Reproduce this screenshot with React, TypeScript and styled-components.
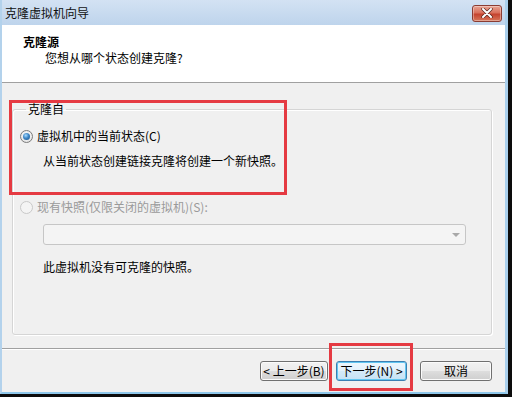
import React from 'react';
import styled, { createGlobalStyle } from 'styled-components';

const GlobalStyle = createGlobalStyle`
  html, body {
    margin: 0;
    padding: 0;
    background: #0c0c0c;
  }
  body {
    font-family: "Noto Sans CJK SC", "Noto Sans", sans-serif;
    font-size: 12px;
    color: #000;
  }
`;

const Window = styled.div`
  position: relative;
  box-sizing: border-box;
  width: 508px;
  height: 394px;
  display: flex;
  flex-direction: column;
  border-left: 2px solid #b3d2ec;
  border-right: 3px solid #a9cfec;
  border-bottom: 2px solid #8ec7ea;
  background: #f0f0f0;
`;

const TitleBar = styled.div`
  height: 25px;
  display: flex;
  align-items: center;
  justify-content: space-between;
  padding: 0 3px 0 3px;
  background: linear-gradient(#d3e2f3, #bed4ec);
`;

const TitleText = styled.span`
  font-size: 12px;
  line-height: 16px;
  color: #111;
`;

const CloseButton = styled.div`
  box-sizing: border-box;
  width: 30px;
  height: 17px;
  margin-top: 1px;
  display: flex;
  align-items: center;
  justify-content: center;
  border: 1px solid #8a3c33;
  border-radius: 3px;
  background: linear-gradient(#e8a493 0%, #d9705c 45%, #c5432f 55%, #d7765a 100%);
  box-shadow: inset 0 0 0 1px rgba(255, 255, 255, 0.35);
`;

const Header = styled.div`
  height: 58px;
  box-sizing: border-box;
  background: #fff;
  border-bottom: 1px solid #a0a0a0;
  padding: 9px 0 0 21px;
`;

const HeaderTitle = styled.div`
  font-weight: bold;
  line-height: 16px;
`;

const HeaderSub = styled.div`
  line-height: 16px;
  padding-left: 22px;
`;

const Body = styled.div`
  flex: 1;
  display: flex;
  flex-direction: column;
  padding: 19px 13px 0 10px;
`;

const GroupBox = styled.fieldset`
  box-sizing: border-box;
  height: 233px;
  margin: 0;
  padding: 12px 7px 0 7px;
  border: 1px solid #d5d5d5;
  border-radius: 3px;
  box-shadow: inset 1px 1px 0 #fff, 1px 1px 0 #fff;
  display: flex;
  flex-direction: column;
`;

const Legend = styled.legend`
  margin-left: 6px;
  padding: 0 2px;
  line-height: 14px;
  font-size: 12px;
`;

const OptionRow = styled.div<{ $disabled?: boolean; $top?: number }>`
  display: flex;
  align-items: center;
  gap: 4px;
  line-height: 16px;
  margin-top: ${({ $top }) => $top ?? 0}px;
  color: ${({ $disabled }) => ($disabled ? '#9a9a9a' : '#000')};
`;

const Radio = styled.span<{ $checked?: boolean; $disabled?: boolean }>`
  position: relative;
  box-sizing: border-box;
  width: 13px;
  height: 13px;
  border-radius: 50%;
  border: 1px solid ${({ $disabled }) => ($disabled ? '#c9c9c9' : '#7b7b7b')};
  background: ${({ $disabled }) =>
    $disabled ? '#f4f4f4' : 'radial-gradient(circle at 50% 40%, #ffffff 0%, #dcdcdc 100%)'};

  &::after {
    content: '';
    display: ${({ $checked }) => ($checked ? 'block' : 'none')};
    position: absolute;
    left: 2px;
    top: 2px;
    width: 7px;
    height: 7px;
    border-radius: 50%;
    background: radial-gradient(circle at 40% 35%, #a8dbff 0%, #3d86c6 45%, #1b4f82 100%);
  }
`;

const Note = styled.div<{ $top: number }>`
  line-height: 16px;
  padding-left: 23px;
  margin-top: ${({ $top }) => $top}px;
`;

const ComboBox = styled.div`
  position: relative;
  box-sizing: border-box;
  height: 21px;
  margin: 9px 18px 0 23px;
  border: 1px solid #c6c6c6;
  border-radius: 3px;
  background: #f4f4f4;

  &::after {
    content: '';
    position: absolute;
    right: 5px;
    top: 8px;
    border-left: 4px solid transparent;
    border-right: 4px solid transparent;
    border-top: 4px solid #a8a8a8;
  }
`;

const Separator = styled.div`
  margin: 13px -13px 0 -10px;
  border-top: 1px solid #a0a0a0;
  border-bottom: 1px solid #fff;
`;

const ButtonRow = styled.div`
  display: flex;
  justify-content: flex-end;
  margin-top: 11px;
`;

const Button = styled.button<{ $width: number; $focused?: boolean; $gap?: number }>`
  box-sizing: border-box;
  width: ${({ $width }) => $width}px;
  height: 20px;
  margin-left: ${({ $gap }) => $gap ?? 0}px;
  padding: 0;
  font-family: "Noto Sans CJK SC", "Noto Sans", sans-serif;
  font-size: 12px;
  line-height: 16px;
  color: #000;
  border-radius: 3px;
  border: 1px solid ${({ $focused }) => ($focused ? '#3c7fb1' : '#707070')};
  background: ${({ $focused }) =>
    $focused
      ? 'linear-gradient(#eef7fd 0%, #e3f1fb 48%, #d4eaf8 52%, #c6e2f5 100%)'
      : 'linear-gradient(#f2f2f2 0%, #ebebeb 48%, #dddddd 52%, #cfcfcf 100%)'};
  box-shadow: inset 0 0 0 1px ${({ $focused }) => ($focused ? '#62c6f1' : '#fbfbfb')};
`;

const Highlight = styled.div<{ $x: number; $y: number; $w: number; $h: number }>`
  position: absolute;
  left: ${({ $x }) => $x}px;
  top: ${({ $y }) => $y}px;
  width: ${({ $w }) => $w}px;
  height: ${({ $h }) => $h}px;
  box-sizing: border-box;
  border: 3px solid #e53a42;
  pointer-events: none;
`;

const CloseIcon = () => (
  <svg width="12" height="10" viewBox="0 0 12 10">
    <path d="M2 1 L10 9 M10 1 L2 9" stroke="#5b2a22" strokeWidth="3.4" strokeLinecap="round" />
    <path d="M2 1 L10 9 M10 1 L2 9" stroke="#fff" strokeWidth="2" strokeLinecap="round" />
  </svg>
);

export default function App() {
  return (
    <>
      <GlobalStyle />
      <Window>
        <TitleBar>
          <TitleText>克隆虚拟机向导</TitleText>
          <CloseButton>
            <CloseIcon />
          </CloseButton>
        </TitleBar>
        <Header>
          <HeaderTitle>克隆源</HeaderTitle>
          <HeaderSub>您想从哪个状态创建克隆?</HeaderSub>
        </Header>
        <Body>
          <GroupBox>
            <Legend>克隆自</Legend>
            <OptionRow>
              <Radio $checked />
              虚拟机中的当前状态(C)
            </OptionRow>
            <Note $top={9}>从当前状态创建链接克隆将创建一个新快照。</Note>
            <OptionRow $disabled $top={30}>
              <Radio $disabled />
              现有快照(仅限关闭的虚拟机)(S):
            </OptionRow>
            <ComboBox />
            <Note $top={14}>此虚拟机没有可克隆的快照。</Note>
          </GroupBox>
          <Separator />
          <ButtonRow>
            <Button $width={68}>&lt; 上一步(B)</Button>
            <Button $width={71} $gap={8} $focused>
              下一步(N) &gt;
            </Button>
            <Button $width={72} $gap={13}>
              取消
            </Button>
          </ButtonRow>
        </Body>
        <Highlight $x={7} $y={100} $w={278} $h={95} />
        <Highlight $x={327} $y={343} $w={84} $h={48} />
      </Window>
    </>
  );
}
